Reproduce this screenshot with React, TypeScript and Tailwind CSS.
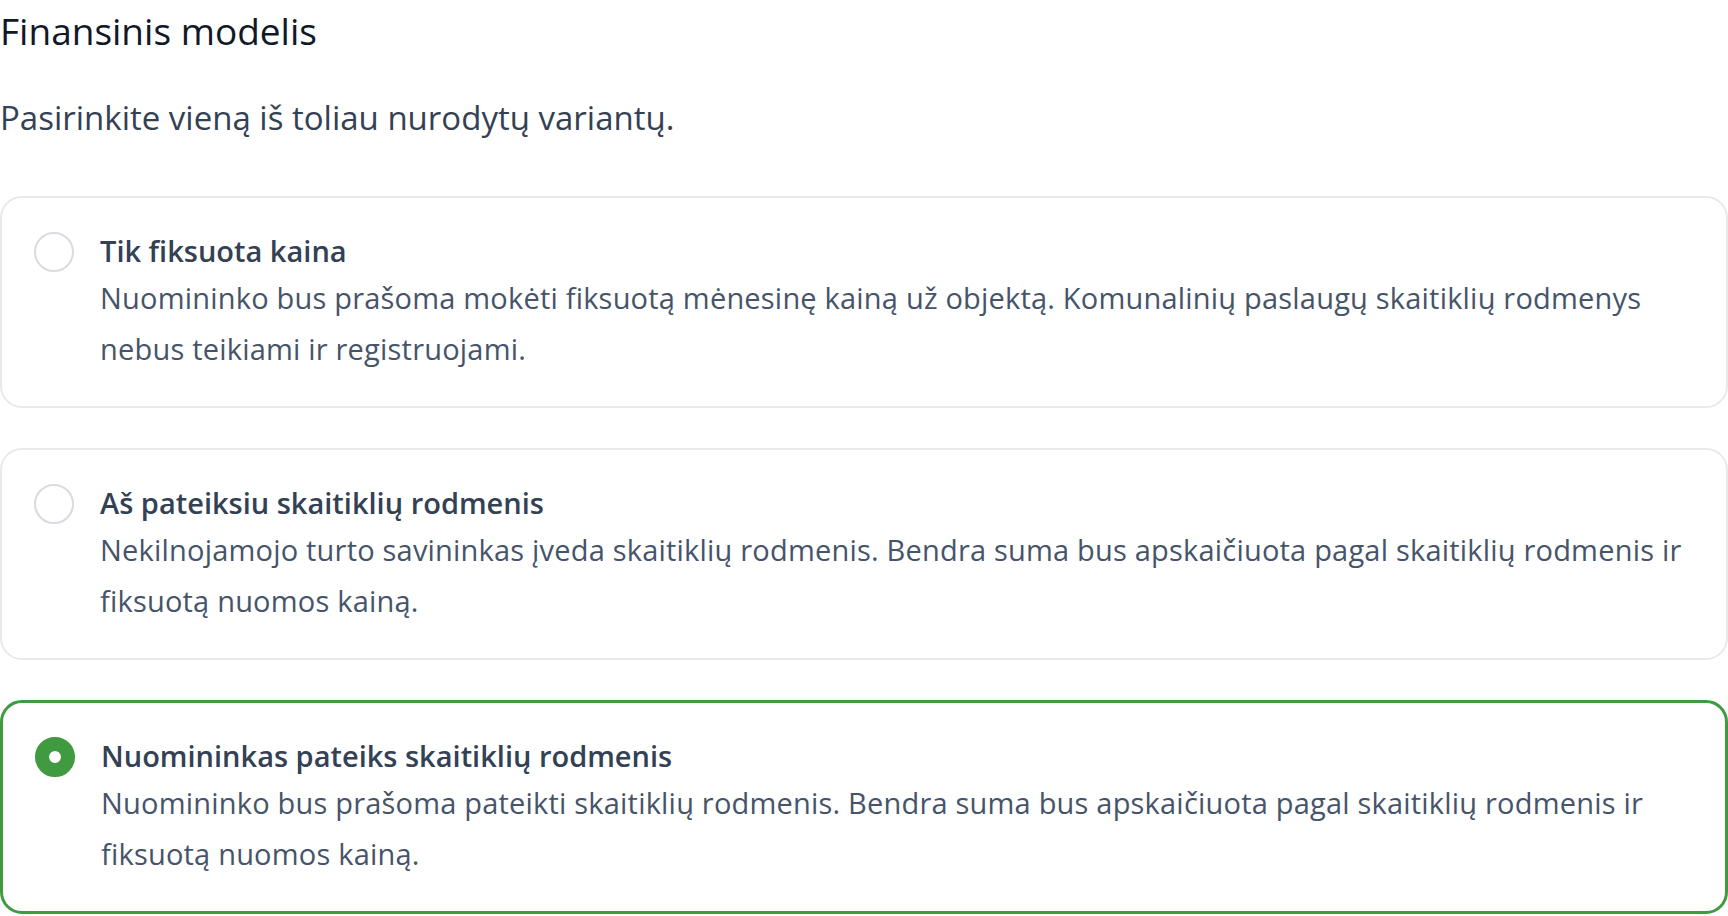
const OPTIONS = [
  {
    id: 'fixed',
    title: 'Tik fiksuota kaina',
    text: 'Nuomininko bus prašoma mokėti fiksuotą mėnesinę kainą už objektą. Komunalinių paslaugų skaitiklių rodmenys nebus teikiami ir registruojami.',
  },
  {
    id: 'owner',
    title: 'Aš pateiksiu skaitiklių rodmenis',
    text: 'Nekilnojamojo turto savininkas įveda skaitiklių rodmenis. Bendra suma bus apskaičiuota pagal skaitiklių rodmenis ir fiksuotą nuomos kainą.',
  },
  {
    id: 'tenant',
    title: 'Nuomininkas pateiks skaitiklių rodmenis',
    text: 'Nuomininko bus prašoma pateikti skaitiklių rodmenis. Bendra suma bus apskaičiuota pagal skaitiklių rodmenis ir fiksuotą nuomos kainą.',
  },
];

function Radio({ checked }: { checked: boolean }) {
  return checked ? (
    <span className="block h-10 w-10 rounded-full border-[14px] border-[#3f9a40] bg-white" />
  ) : (
    <span className="block h-10 w-10 rounded-full border-2 border-[#d9dbe0] bg-white" />
  );
}

export default function App() {
  const selected = 'tenant';

  return (
    <div className="min-h-screen bg-white font-['Open_Sans',sans-serif]">
      <h1 className="pt-[7px] text-[37px] leading-[48px] font-normal text-[#111827]">
        Finansinis modelis
      </h1>
      <p className="mt-[41px] text-[33px] leading-[44px] text-[#344154]">
        Pasirinkite vieną iš toliau nurodytų variantų.
      </p>

      <div className="mt-[56px] flex flex-col gap-10">
        {OPTIONS.map((o) => {
          const on = o.id === selected;
          return (
            <label
              key={o.id}
              className={
                on
                  ? 'flex cursor-pointer items-start gap-[26px] rounded-[22px] border-[3px] border-[#3f9a40] bg-white p-8'
                  : 'flex cursor-pointer items-start gap-[26px] rounded-[22px] border-2 border-[#e8e9ed] bg-white p-8'
              }
            >
              <div className="flex h-[42px] shrink-0 items-center pt-[2px]">
                <Radio checked={on} />
              </div>
              <div className="min-w-0 flex-1">
                <div className="text-[29px] leading-[42px] font-semibold text-[#334155]">
                  {o.title}
                </div>
                <div className="text-[29px] leading-[51px] tracking-[0.2px] text-[#46546a]">
                  {o.text}
                </div>
              </div>
            </label>
          );
        })}
      </div>
    </div>
  );
}
